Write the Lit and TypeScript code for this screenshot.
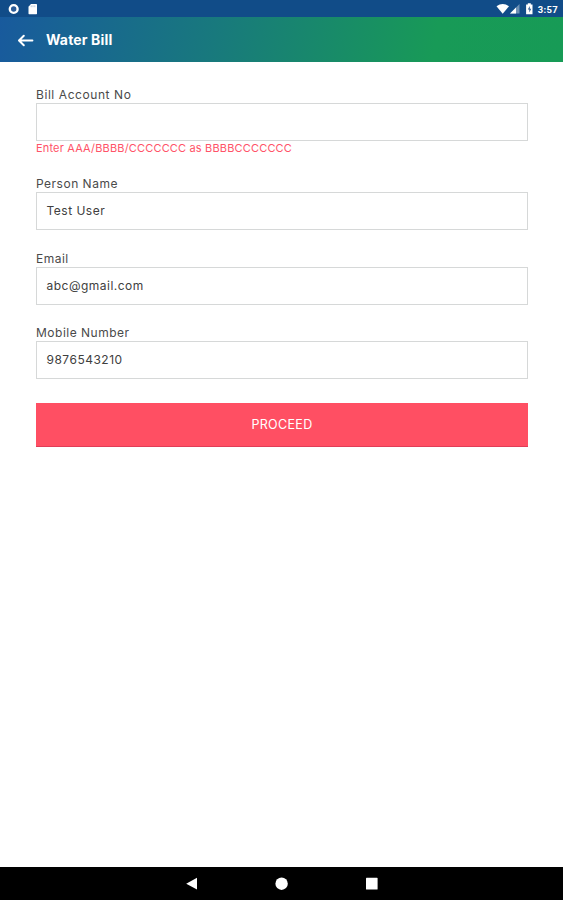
import { LitElement, html, css, nothing } from "lit";
import { customElement } from "lit/decorators.js";

interface Field {
  label: string;
  value: string;
  hint?: string;
  labelSpacing: number;
  valueSpacing: number;
}

const FIELDS: Field[] = [
  { label: "Bill Account No", value: "", hint: "Enter AAA/BBBB/CCCCCCC as BBBBCCCCCCC", labelSpacing: 0.57, valueSpacing: 0 },
  { label: "Person Name", value: "Test User", labelSpacing: 0.5, valueSpacing: 0.5 },
  { label: "Email", value: "abc@gmail.com", labelSpacing: 0.5, valueSpacing: 0.48 },
  { label: "Mobile Number", value: "9876543210", labelSpacing: 0.5, valueSpacing: 0.5 },
];

@customElement("app-root")
export class AppRoot extends LitElement {
  static styles = css`
    :host {
      display: flex;
      flex-direction: column;
      height: 900px;
      background: #fff;
      font-family: Inter, "Open Sans", sans-serif;
      font-size: 12px;
      color: #4a4a4a;
    }
    svg { display: block; }
    .status {
      display: flex;
      justify-content: space-between;
      flex: none;
      height: 17px;
      background: #114c88;
    }
    .header {
      box-sizing: border-box;
      display: flex;
      align-items: center;
      flex: none;
      height: 45px;
      padding-left: 17px;
      gap: 12px;
      background: linear-gradient(100deg, #185a9d 0%, #18797d 38%, #189a57 77%, #179b56 100%);
    }
    .title {
      margin: 0;
      font-size: 14px;
      font-weight: 700;
      color: #fff;
      line-height: 18px;
      letter-spacing: 0.15px;
    }
    .form {
      flex: 1;
      padding: 25px 35px 0 36px;
    }
    .field { height: 74.5px; }
    .field.hinted { height: 89px; }
    .label { display: block; height: 16px; line-height: 16px; white-space: nowrap; }
    .box {
      box-sizing: border-box;
      height: 38px;
      border: 1px solid #d6d8d8;
      padding-left: 9.5px;
      line-height: 35px;
      white-space: nowrap;
      color: #404040;
    }
    .hint {
      font-size: 11px;
      line-height: 14px;
      color: #ff5368;
      white-space: nowrap;
      letter-spacing: 0.17px;
    }
    .proceed {
      display: block;
      box-sizing: border-box;
      width: 100%;
      height: 44px;
      margin: 3.5px 0 0;
      padding: 0;
      border: 0;
      border-bottom: 1px solid #e03d57;
      background: #ff4f63;
      color: #fff;
      font: 12.5px Inter, sans-serif;
      letter-spacing: 0.35px;
    }
    .nav { flex: none; height: 33px; background: #000; }
  `;

  render() {
    return html`
      <div class="status">
        <svg width="45" height="17">
          <circle cx="13.7" cy="9" r="3.9" fill="#2b5c98" stroke="#fff" stroke-width="2.4" />
          <path d="M31 4h5.4q.6 0 .6.6v9q0 .6-.6.6h-7.3q-.6 0-.6-.6V6.8z" fill="#fff" />
          <path d="M31.2 5.4v1.8M33 5.4v1.8M34.8 5.4v1.8" stroke="#8ba8c8" stroke-width=".6" />
        </svg>
        <svg width="70" height="17">
          <path d="M3.5 6.2Q9.7 1.8 16 6.2L9.7 13.8z" fill="#fff" />
          <path d="M26.5 4v9.6H17z" fill="#6f91b5" />
          <path d="M23 7.6v6h-6z" fill="#fff" />
          <path d="M34.8 3.2h3v1.2h1.7v9.8h-6.4V4.4h1.7z" fill="#fff" />
          <path d="M36.8 6l-2 3.6h1.5v2.8l2-3.7h-1.5z" fill="#355f93" />
          <text x="44.7" y="12.7" fill="#fff" font-family="Roboto" font-size="9.5" font-weight="700" textLength="20">3:57</text>
        </svg>
      </div>
      <header class="header">
        <svg width="17" height="14" fill="none" stroke="#fff" stroke-width="2" stroke-linecap="round" stroke-linejoin="round">
          <path d="M15.4 7.5H2.2M6.8 2.7L2 7.5l4.8 4.8" />
        </svg>
        <h1 class="title">Water Bill</h1>
      </header>
      <main class="form">
        ${FIELDS.map((f) => html`
          <div class="field ${f.hint ? "hinted" : ""}">
            <label class="label" style="letter-spacing:${f.labelSpacing}px">${f.label}</label>
            <div class="box" style="letter-spacing:${f.valueSpacing}px">${f.value}</div>
            ${f.hint ? html`<div class="hint">${f.hint}</div>` : nothing}
          </div>`)}
        <button class="proceed">PROCEED</button>
      </main>
      <nav class="nav">
        <svg width="563" height="33" fill="#fff">
          <path d="M197 10.8v11.8l-10.8-5.9z" />
          <circle cx="281.6" cy="16.7" r="6.2" />
          <rect x="366" y="10.8" width="11.6" height="11.8" rx=".6" />
        </svg>
      </nav>
    `;
  }
}
